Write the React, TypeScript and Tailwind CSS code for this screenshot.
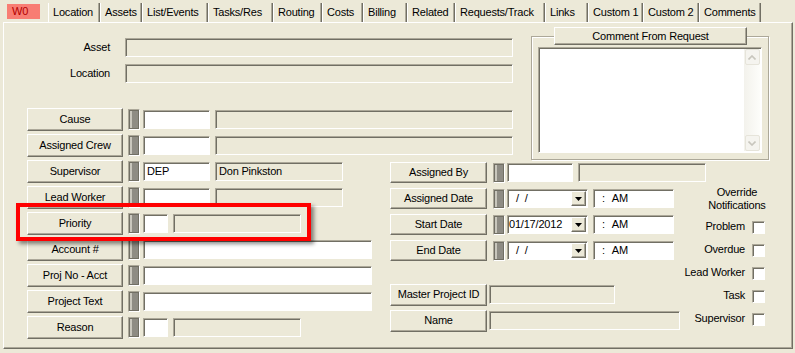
import React from "react";

const btn =
  "flex items-center justify-center shrink-0 bg-[#ece9d8] border border-t-white border-l-white border-r-[#716f64] border-b-[#716f64] shadow-[inset_-1px_-1px_0_#aca899]";
const sunken =
  "shrink-0 border border-t-[#aca899] border-l-[#aca899] border-r-white border-b-white shadow-[inset_1px_1px_0_#716f64]";

const TABS: [string, string][] = [
  ["Location", "w-[52px]"],
  ["Assets", "w-[42px]"],
  ["List/Events", "w-[66px]"],
  ["Tasks/Res", "w-[65px]"],
  ["Routing", "w-[49px]"],
  ["Costs", "w-[41px]"],
  ["Billing", "w-[44px]"],
  ["Related", "w-[48px]"],
  ["Requests/Track", "w-[90px]"],
  ["Links", "w-[43px]"],
  ["Custom 1", "w-[55px]"],
  ["Custom 2", "w-[56px]"],
  ["Comments", "w-[62px]"],
];

function Lock({ h = "h-[21px]" }: { h?: string }) {
  return (
    <div className={`w-[12px] ${h} shrink-0 border border-t-[#aca899] border-l-[#aca899] border-r-white border-b-white flex`}>
      <div className="flex-1 border border-[#716f64] bg-[#8e8c84] shadow-[inset_2px_0_0_#c9c7bd]" />
    </div>
  );
}

function Field({ w, white, children }: { w: string; white?: boolean; children?: React.ReactNode }) {
  return (
    <div className={`${sunken} h-[19px] flex items-center px-[3px] whitespace-nowrap ${white ? "bg-white" : "bg-[#ece9d8]"} ${w}`}>
      {children}
    </div>
  );
}

function LeftRow({ label, children }: { label: string; children: React.ReactNode }) {
  return (
    <div className="h-[23px] flex items-center">
      <div className={`${btn} w-[96px] h-[23px]`}>{label}</div>
      <div className="ml-[5px]">
        <Lock />
      </div>
      <div className="ml-[3px] flex items-center gap-[5px]">{children}</div>
    </div>
  );
}

function DateCombo({ value }: { value?: string }) {
  return (
    <div className={`${sunken} h-[19px] w-[81px] bg-white flex items-center justify-between pr-[1px]`}>
      {value ? (
        <span className="pl-[1px]">{value}</span>
      ) : (
        <span className="flex">
          <span className="pl-[8px]">/</span>
          <span className="pl-[6px]">/</span>
        </span>
      )}
      <div className={`${btn} w-[15px] h-[15px]`}>
        <svg width="7" height="4" viewBox="0 0 7 4">
          <path d="M0 0h7L3.5 4z" fill="#000" />
        </svg>
      </div>
    </div>
  );
}

function TimeField() {
  return (
    <div className={`${sunken} h-[19px] w-[81px] bg-white flex items-center`}>
      <span className="pl-[8px]">:</span>
      <span className="pl-[7px]">AM</span>
    </div>
  );
}

function MidRow({ label, children }: { label: string; children: React.ReactNode }) {
  return (
    <div className="h-[23px] flex items-center">
      <div className={`${btn} w-[97px] h-[21px]`}>{label}</div>
      <div className="ml-[6px]">
        <Lock h="h-[20px]" />
      </div>
      <div className="ml-[2px] flex items-center gap-[5px]">{children}</div>
    </div>
  );
}

function Check({ label }: { label: string }) {
  return (
    <div className="h-[13px] flex items-center justify-end gap-[7px] pr-[3px]">
      <span className="-mt-[3px]">{label}</span>
      <div className="w-[13px] h-[13px] shrink-0 bg-white border border-t-[#aca899] border-l-[#aca899] border-r-white border-b-white shadow-[inset_1px_1px_0_#716f64]" />
    </div>
  );
}

function ScrollBtn({ up }: { up?: boolean }) {
  return (
    <div className="h-[16px] w-[15px] mx-auto rounded-[2px] border border-[#e6e4da] bg-[#f5f4ef] flex items-center justify-center">
      <svg width="8" height="5" viewBox="0 0 8 5">
        <path d={up ? "M0.5 4.5L4 1L7.5 4.5" : "M0.5 0.5L4 4L7.5 0.5"} stroke="#c8c6bd" strokeWidth="1.6" fill="none" />
      </svg>
    </div>
  );
}

export default function App() {
  return (
    <div className="w-[795px] h-[353px] bg-[#ece9d8] relative overflow-hidden text-[11px] tracking-[-0.2px] text-black font-['Liberation_Sans',Arial,sans-serif] leading-none">
      {/* tab strip */}
      <div className="flex items-start pt-[3px] h-[22px]">
        <div className="ml-[7px] mt-[1px] w-[33px] h-[15px] bg-[#f87d73] text-[#b30000] pl-[5px] flex items-center">W0</div>
        <div className="ml-[8px] flex">
          {TABS.map(([t, w]) => (
            <div
              key={t}
              className={`${w} h-[19px] pl-[4px] flex items-center whitespace-nowrap border-l border-l-white border-r border-r-[#716f64] shadow-[inset_-1px_0_0_#aca899]`}
            >
              {t}
            </div>
          ))}
        </div>
      </div>

      {/* tab page */}
      <div className="ml-[3px] w-[790px] h-[327px] border border-t-white border-l-white border-r-[#716f64] border-b-[#716f64] shadow-[inset_-1px_-1px_0_#aca899]">
        {/* upper band */}
        <div className="h-[137px] flex items-start pl-[23px]">
          <div className="w-[486px] pt-[15px] flex flex-col">
            <div className="h-[19px] flex items-center">
              <div className="w-[83px] text-right">Asset</div>
              <div className="ml-[15px]">
                <Field w="w-[388px]" />
              </div>
            </div>
            <div className="h-[19px] mt-[7px] flex items-center">
              <div className="w-[83px] text-right">Location</div>
              <div className="ml-[15px]">
                <Field w="w-[388px]" />
              </div>
            </div>
            <div className="mt-[25px] flex flex-col gap-[3px]">
              <LeftRow label="Cause">
                <Field w="w-[67px]" white />
                <Field w="w-[298px]" />
              </LeftRow>
              <LeftRow label="Assigned Crew">
                <Field w="w-[67px]" white />
                <Field w="w-[298px]" />
              </LeftRow>
            </div>
          </div>

          {/* comment from request */}
          <div className="ml-[18px] mt-[4px] w-[238px] flex flex-col">
            <div className={`${btn} relative z-10 ml-[23px] w-[193px] h-[18px]`}>Comment From Request</div>
            <div className="-mt-[9px] h-[124px] border border-[#aca899] shadow-[inset_1px_1px_0_#fff,1px_1px_0_#fff] pl-[6px] pt-[10px]">
              <div className={`${sunken} w-[224px] h-[106px] bg-white flex justify-end p-[1px]`}>
                <div className="w-[16px] h-full flex flex-col bg-gradient-to-r from-[#f3f2ec] to-[#fdfdfa]">
                  <ScrollBtn up />
                  <div className="flex-1" />
                  <ScrollBtn />
                </div>
              </div>
            </div>
          </div>
        </div>

        {/* lower band */}
        <div className="flex items-start pl-[23px]">
          <div className="w-[345px] flex flex-col gap-[3px]">
            <LeftRow label="Supervisor">
              <Field w="w-[67px]" white>DEP</Field>
              <Field w="w-[128px]">Don Pinkston</Field>
            </LeftRow>
            <LeftRow label="Lead Worker">
              <Field w="w-[67px]" white />
              <Field w="w-[128px]" />
            </LeftRow>
            <LeftRow label="Priority">
              <Field w="w-[25px]" white />
              <Field w="w-[128px]" />
            </LeftRow>
            <LeftRow label="Account #">
              <Field w="w-[229px]" white />
            </LeftRow>
            <LeftRow label="Proj No - Acct">
              <Field w="w-[229px]" white />
            </LeftRow>
            <LeftRow label="Project Text">
              <Field w="w-[229px]" white />
            </LeftRow>
            <LeftRow label="Reason">
              <Field w="w-[25px]" white />
              <Field w="w-[128px]" />
            </LeftRow>
          </div>

          <div className="ml-[18px] w-[290px] pt-[1px] flex flex-col">
            <div className="flex flex-col gap-[3px]">
              <MidRow label="Assigned By">
                <Field w="w-[66px]" white />
                <Field w="w-[128px]" />
              </MidRow>
              <MidRow label="Assigned Date">
                <DateCombo />
                <TimeField />
              </MidRow>
              <MidRow label="Start Date">
                <DateCombo value="01/17/2012" />
                <TimeField />
              </MidRow>
              <MidRow label="End Date">
                <DateCombo />
                <TimeField />
              </MidRow>
            </div>
            <div className="mt-[21px] flex flex-col gap-[3px]">
              <div className="h-[23px] flex items-center">
                <div className={`${btn} w-[97px] h-[22px]`}>Master Project ID</div>
                <div className="ml-[2px]">
                  <Field w="w-[126px]" />
                </div>
              </div>
              <div className="h-[23px] flex items-center">
                <div className={`${btn} w-[97px] h-[22px]`}>Name</div>
                <div className="ml-[2px]">
                  <Field w="w-[191px]" />
                </div>
              </div>
            </div>
          </div>

          <div className="w-[88px] pt-[26px] flex flex-col">
            <div className="self-end w-[62px] text-center leading-[13px]">
              Override
              <br />
              Notifications
            </div>
            <div className="mt-[9px] flex flex-col gap-[10px]">
              <Check label="Problem" />
              <Check label="Overdue" />
              <Check label="Lead Worker" />
              <Check label="Task" />
              <Check label="Supervisor" />
            </div>
          </div>
        </div>
      </div>

      {/* highlight annotation */}
      <div className="absolute left-[16px] top-[203px] w-[295px] h-[38px] border-[4px] border-[#ff0000] shadow-[3px_3px_4px_rgba(0,0,0,0.45)] pointer-events-none" />
    </div>
  );
}
